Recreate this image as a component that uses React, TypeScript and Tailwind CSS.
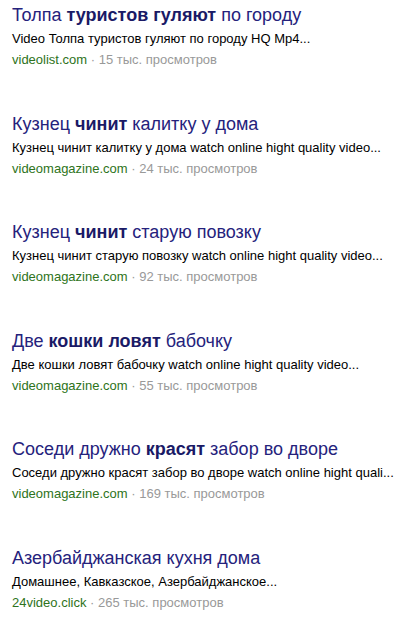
const results = [
  {
    title: ['Толпа ', 'туристов гуляют', ' по городу'],
    snippet: 'Video Толпа туристов гуляют по городу HQ Mp4...',
    domain: 'videolist.com',
    views: '15',
  },
  {
    title: ['Кузнец ', 'чинит', ' калитку у дома'],
    snippet: 'Кузнец чинит калитку у дома watch online hight quality video...',
    domain: 'videomagazine.com',
    views: '24',
  },
  {
    title: ['Кузнец ', 'чинит', ' старую повозку'],
    snippet: 'Кузнец чинит старую повозку watch online hight quality video...',
    domain: 'videomagazine.com',
    views: '92',
  },
  {
    title: ['Две ', 'кошки ловят', ' бабочку'],
    snippet: 'Две кошки ловят бабочку watch online hight quality video...',
    domain: 'videomagazine.com',
    views: '55',
  },
  {
    title: ['Соседи дружно ', 'красят', ' забор во дворе'],
    snippet: 'Соседи дружно красят забор во дворе watch online hight quali...',
    domain: 'videomagazine.com',
    views: '169',
  },
  {
    title: ['Азербайджанская кухня дома', '', ''],
    snippet: 'Домашнее, Кавказское, Азербайджанское...',
    domain: '24video.click',
    views: '265',
  },
];

export default function App() {
  return (
    <div className="w-[415px] h-[626px] bg-white overflow-hidden pl-3 pt-[3px] font-['Liberation_Sans',Arial,sans-serif]">
      <div className="flex flex-col gap-[41.6px]">
        {results.map((r, i) => (
          <div key={i} className="flex flex-col">
            <div className="text-[18px] leading-[24px] text-[#25227c] whitespace-nowrap">
              {r.title[0]}
              {r.title[1] && <b className="font-bold text-[#1a1a66]">{r.title[1]}</b>}
              {r.title[2]}
            </div>
            <div className="text-[13px] leading-[21px] mt-[1px] text-black whitespace-nowrap">
              {r.snippet}
            </div>
            <div className="text-[13px] leading-[21px] whitespace-nowrap">
              <span className="text-[#2e7320]">{r.domain}</span>
              <span className="text-[#999]"> · {r.views} тыс. просмотров</span>
            </div>
          </div>
        ))}
      </div>
    </div>
  );
}
